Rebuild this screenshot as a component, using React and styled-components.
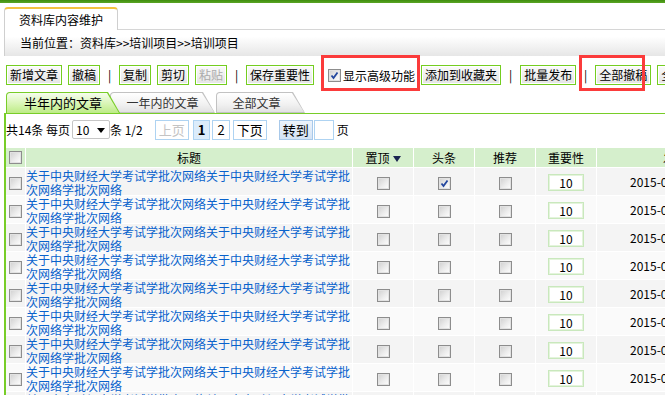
import React from 'react';
import styled, { createGlobalStyle } from 'styled-components';

const GlobalStyle = createGlobalStyle`
  html, body {
    margin: 0;
    padding: 0;
    overflow: hidden;
    background: #fff;
  }
  body {
    font-family: "Noto Sans CJK SC", "Noto Sans", sans-serif;
    font-size: 12px;
    color: #000;
  }
`;

const Page = styled.div`
  position: relative;
  width: 780px;
  height: 395px;
  overflow: hidden;
`;

const TopBar = styled.div`
  height: 3px;
  background: linear-gradient(#3f8d0e, #5aa624);
`;

const Header = styled.div`
  margin: 4px 0 0 4px;
`;

const TitleRow = styled.div`
  display: flex;
  align-items: flex-end;
`;

const TitleTab = styled.div`
  width: 114px;
  height: 23px;
  box-sizing: border-box;
  border: 1px solid #cfcfcf;
  border-top: 2px solid #f3c23f;
  border-bottom: none;
  border-radius: 4px 4px 0 0;
  padding-left: 14px;
  line-height: 21px;
  white-space: nowrap;
`;

const TitleFill = styled.div`
  flex: 1;
  border-bottom: 1px solid #d6d6d6;
`;

const Breadcrumb = styled.div`
  height: 26px;
  border-left: 1px solid #cfcfcf;
  padding-left: 15px;
  line-height: 26px;
  background: linear-gradient(#fff 25%, #e6e6e6);
`;

const Toolbar = styled.div`
  display: flex;
  align-items: center;
  gap: 6px;
  height: 20px;
  margin-top: 9px;
  padding-left: 6px;
`;

const ToolButton = styled.div`
  height: 20px;
  box-sizing: border-box;
  border: 1px solid #74cd20;
  padding: 0 3px;
  line-height: 18px;
  white-space: nowrap;
  background: linear-gradient(#fbfbfb, #e4e4e4);
  box-shadow: inset 0 0 0 1px #fff;
  color: ${p => (p.$disabled ? '#ababab' : '#000')};
`;

const Sep = styled.span`
  width: 7px;
  text-align: center;
  line-height: 20px;
`;

const CheckLabel = styled.label`
  display: flex;
  align-items: center;
  gap: 2px;
  margin-left: 8px;
  white-space: nowrap;
`;

const Box = styled.span`
  position: relative;
  display: inline-block;
  flex: none;
  width: 13px;
  height: 13px;
  box-sizing: border-box;
  border: 1px solid #8d8d8d;
  background: linear-gradient(135deg, #cfcfcf 0%, #ececec 55%, #fff 100%);
  box-shadow: inset 0 0 0 1px #e2e2e2;

  svg {
    position: absolute;
    left: 0;
    top: 0;
  }
`;

const Checkbox = ({ checked }) => (
  <Box>
    {checked && (
      <svg width="11" height="11" viewBox="0 0 11 11">
        <path d="M2.5 5.5 L4.5 8 L8.5 2.5" fill="none" stroke="#23479e" strokeWidth="1.8" />
      </svg>
    )}
  </Box>
);

const TabRow = styled.div`
  display: flex;
  height: 21px;
  margin-top: 7px;
  padding-left: 6px;
`;

const Tab = styled.div`
  position: relative;
  z-index: ${p => (p.$active ? 2 : 1)};
  width: ${p => p.$w}px;
  height: 21px;
  margin-left: ${p => p.$ml || 0}px;
  padding-right: ${p => p.$pr || 0}px;
  box-sizing: border-box;
  background: ${p => (p.$active ? '#78cd28' : '#c2c2c2')};
  border-radius: 4px 0 0 0;
  clip-path: polygon(0 0, calc(100% - 12px) 0, 100% 100%, 0 100%);
  text-align: center;
  line-height: 22px;
  font-size: ${p => (p.$active ? 13 : 12)}px;
  white-space: nowrap;
  color: ${p => (p.$active ? '#000' : '#333')};

  &::before {
    content: '';
    position: absolute;
    inset: 1px 1px ${p => (p.$active ? 0 : 1)}px 1px;
    z-index: -1;
    border-radius: 3px 0 0 0;
    clip-path: polygon(0 0, calc(100% - 12px) 0, 100% 100%, 0 100%);
    background: ${p =>
      p.$active
        ? 'linear-gradient(#f6fdee, #d8f5b4 55%, #bdeb86)'
        : 'linear-gradient(#ffffff, #f1f1f1 60%, #e2e2e2)'};
  }
`;

const Panel = styled.div`
  margin-left: 4px;
  border-left: 2px solid #78cd28;
  border-top: 1px solid #78cd28;
  height: 300px;
`;

const Pager = styled.div`
  display: flex;
  align-items: center;
  height: 21px;
  margin-top: 5px;
  white-space: nowrap;
`;

const PagerText = styled.span`
  margin-left: ${p => p.$ml || 0}px;
`;

const FakeSelect = styled.div`
  position: relative;
  width: 38px;
  height: 19px;
  box-sizing: border-box;
  margin-left: 2px;
  border: 1px solid #c6c6c6;
  border-radius: 2px;
  padding-left: 3px;
  line-height: 17px;

  &::after {
    content: '';
    position: absolute;
    right: 4px;
    top: 7px;
    border-left: 4px solid transparent;
    border-right: 4px solid transparent;
    border-top: 5px solid #000;
  }
`;

const PageBtn = styled.div`
  height: 20px;
  box-sizing: border-box;
  margin-left: ${p => p.$ml || 2}px;
  border: 1px solid #aed3f2;
  padding: 0 ${p => (p.$num ? 4 : 3)}px;
  line-height: 18px;
  font-size: 13px;
  font-weight: ${p => (p.$current ? 700 : 400)};
  color: ${p => (p.$disabled ? '#c4c4c4' : '#000')};
  background: ${p => (p.$current ? '#dcecfb' : '#fff')};
`;

const GoBtn = styled.div`
  height: 20px;
  box-sizing: border-box;
  margin-left: 12px;
  border: 1px solid #a8c9ea;
  padding: 0 3px;
  line-height: 18px;
  font-size: 13px;
  background: linear-gradient(#edf3fb, #d3e3f5);
`;

const PageInput = styled.div`
  width: 20px;
  height: 20px;
  box-sizing: border-box;
  margin-left: 1px;
  border: 1px solid #aed3f2;
`;

const Table = styled.div`
  margin-top: 8px;
  width: 720px;
`;

const Row = styled.div`
  display: grid;
  grid-template-columns: 19px 326px 60px 60px 60px 60px 180px;
  column-gap: 1px;
  margin-bottom: 1px;
  --row-bg: ${p => p.$bg};
`;

const HeadCell = styled.div`
  display: flex;
  align-items: center;
  justify-content: center;
  gap: 3px;
  height: 19px;
  background: var(--row-bg);
  white-space: nowrap;
  overflow: hidden;
`;

const Cell = styled.div`
  display: flex;
  align-items: center;
  justify-content: ${p => p.$align || 'center'};
  height: 27px;
  background: var(--row-bg);
  overflow: ${p => (p.$clip ? 'hidden' : 'visible')};
  white-space: nowrap;
`;

const CheckCell = styled(Cell)`
  padding-top: 3px;
  box-sizing: border-box;
`;

const TitleCell = styled.div`
  height: 27px;
  background: var(--row-bg);
  color: #0862cc;
  line-height: 14px;
  padding-top: 1px;
  box-sizing: border-box;
  position: relative;
  z-index: 1;
`;

const SortArrow = styled.span`
  width: 0;
  height: 0;
  margin-top: 2px;
  border-left: 4px solid transparent;
  border-right: 4px solid transparent;
  border-top: 6px solid #1b2550;
`;

const WeightInput = styled.div`
  width: 36px;
  height: 17px;
  box-sizing: border-box;
  margin-top: 2px;
  border: 1px solid #c9e8bd;
  box-shadow: inset 0 0 0 1px #e4f4dc;
  background: #fff;
  text-align: center;
  line-height: 15px;
`;

const DateText = styled.span`
  padding-left: 33px;
  width: 100%;
`;

const Highlight = styled.div`
  position: absolute;
  left: ${p => p.$x}px;
  top: ${p => p.$y}px;
  width: ${p => p.$w}px;
  height: ${p => p.$h}px;
  box-sizing: border-box;
  border: 3px solid #fb3b3b;
  pointer-events: none;
  z-index: 5;
`;

const TITLE = '关于中央财经大学考试学批次网络关于中央财经大学考试学批次网络学批次网络';

const rows = Array.from({ length: 9 }, (_, i) => ({
  id: i,
  top: false,
  head: i === 0,
  rec: false,
  weight: 10,
  date: '2015-03-16 10:25',
}));

export default function App() {
  return (
    <Page>
      <GlobalStyle />
      <TopBar />
      <Header>
        <TitleRow>
          <TitleTab>资料库内容维护</TitleTab>
          <TitleFill />
        </TitleRow>
        <Breadcrumb>当前位置：资料库&gt;&gt;培训项目&gt;&gt;培训项目</Breadcrumb>
      </Header>

      <Toolbar>
        <ToolButton>新增文章</ToolButton>
        <ToolButton>撤稿</ToolButton>
        <Sep>|</Sep>
        <ToolButton>复制</ToolButton>
        <ToolButton>剪切</ToolButton>
        <ToolButton $disabled>粘贴</ToolButton>
        <Sep>|</Sep>
        <ToolButton>保存重要性</ToolButton>
        <CheckLabel>
          <Checkbox checked />
          显示高级功能
        </CheckLabel>
        <ToolButton>添加到收藏夹</ToolButton>
        <Sep>|</Sep>
        <ToolButton>批量发布</ToolButton>
        <Sep>|</Sep>
        <ToolButton>全部撤稿</ToolButton>
        <ToolButton>全部发布</ToolButton>
      </Toolbar>

      <TabRow>
        <Tab $active $w={114}>半年内的文章</Tab>
        <Tab $w={105} $ml={-10}>一年内的文章</Tab>
        <Tab $w={89} $ml={1} $pr={8}>全部文章</Tab>
      </TabRow>

      <Panel>
        <Pager>
          <PagerText>共14条 每页</PagerText>
          <FakeSelect>10</FakeSelect>
          <PagerText>条 1/2</PagerText>
          <PageBtn $disabled $ml={12}>上页</PageBtn>
          <PageBtn $current $num $ml={4}>1</PageBtn>
          <PageBtn $num>2</PageBtn>
          <PageBtn $ml={3}>下页</PageBtn>
          <GoBtn>转到</GoBtn>
          <PageInput />
          <PagerText $ml={3}>页</PagerText>
        </Pager>

        <Table>
          <Row $bg="#d5efcc">
            <HeadCell><Checkbox /></HeadCell>
            <HeadCell>标题</HeadCell>
            <HeadCell>置顶<SortArrow /></HeadCell>
            <HeadCell>头条</HeadCell>
            <HeadCell>推荐</HeadCell>
            <HeadCell>重要性</HeadCell>
            <HeadCell>发布时间</HeadCell>
          </Row>
          {rows.map((r, i) => (
            <Row key={r.id} $bg={i % 2 === 0 ? '#f4f4f4' : '#fafafa'}>
              <CheckCell><Checkbox /></CheckCell>
              <TitleCell>{TITLE}</TitleCell>
              <CheckCell><Checkbox checked={r.top} /></CheckCell>
              <CheckCell><Checkbox checked={r.head} /></CheckCell>
              <CheckCell><Checkbox checked={r.rec} /></CheckCell>
              <Cell><WeightInput>{r.weight}</WeightInput></Cell>
              <Cell $align="flex-start" $clip>
                <DateText>{r.date}</DateText>
              </Cell>
            </Row>
          ))}
        </Table>
      </Panel>

      <Highlight $x={321} $y={55} $w={99} $h={36} />
      <Highlight $x={579} $y={55} $w={66} $h={36} />
    </Page>
  );
}
